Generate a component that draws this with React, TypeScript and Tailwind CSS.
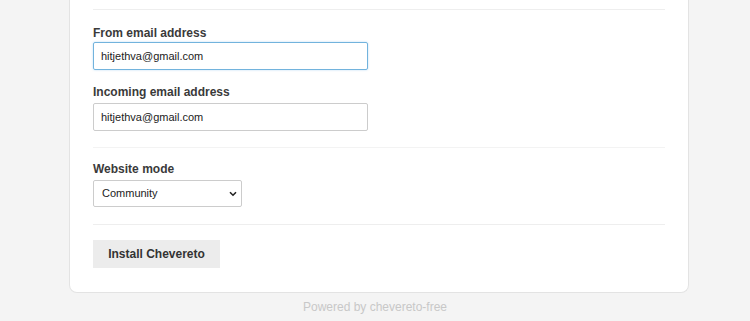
export default function App() {
  return (
    <div className="min-h-[321px] w-full bg-[#f4f4f4] font-['Liberation_Sans',Arial,sans-serif] text-[#3a3a3a]">
      <div className="ml-[69px] w-[620px] rounded-b-lg border border-t-0 border-[#e3e3e3] bg-white px-[23px] pb-[24px] pt-[9px]">
        <hr className="border-[#eeeeee]" />

        <div className="pt-[16px]">
          <label className="block text-[12px] font-bold leading-[14px]">From email address</label>
          <input
            type="text"
            defaultValue="hitjethva@gmail.com"
            className="mt-[2px] block h-[28px] w-[275px] rounded-[2px] border border-[#72b3dd] px-[7px] text-[11px] text-[#222] shadow-[0_0_2px_rgba(102,175,233,0.5)] outline-none"
          />
        </div>

        <div className="pt-[15px]">
          <label className="block text-[12px] font-bold leading-[14px]">Incoming email address</label>
          <input
            type="text"
            defaultValue="hitjethva@gmail.com"
            className="mt-[4px] block h-[28px] w-[275px] rounded-[2px] border border-[#cccccc] px-[7px] text-[11px] text-[#222] outline-none"
          />
        </div>

        <hr className="mt-[16px] border-[#f3f3f3]" />

        <div className="pt-[14px]">
          <label className="block text-[12px] font-bold leading-[14px]">Website mode</label>
          <div className="relative mt-[4px] w-[149px]">
            <select
              defaultValue="community"
              className="block h-[27px] w-full appearance-none rounded-[2px] border border-[#cccccc] bg-white px-[8px] text-[11px] text-[#222] outline-none"
            >
              <option value="community">Community</option>
              <option value="personal">Personal</option>
            </select>
            <svg
              className="pointer-events-none absolute right-[5px] top-[11px]"
              width="8"
              height="6"
              viewBox="0 0 8 6"
            >
              <path d="M1 1.2 L4 4.2 L7 1.2" fill="none" stroke="#222" strokeWidth="1.6" />
            </svg>
          </div>
        </div>

        <hr className="mt-[17px] border-[#eeeeee]" />

        <button className="mt-[15px] block h-[28px] w-[127px] bg-[#ececec] text-[12px] font-bold text-[#333]">
          Install Chevereto
        </button>
      </div>

      <p className="pt-[6px] text-center text-[12px] leading-[16px] text-[#c8c8c8]">Powered by chevereto-free</p>
    </div>
  );
}
